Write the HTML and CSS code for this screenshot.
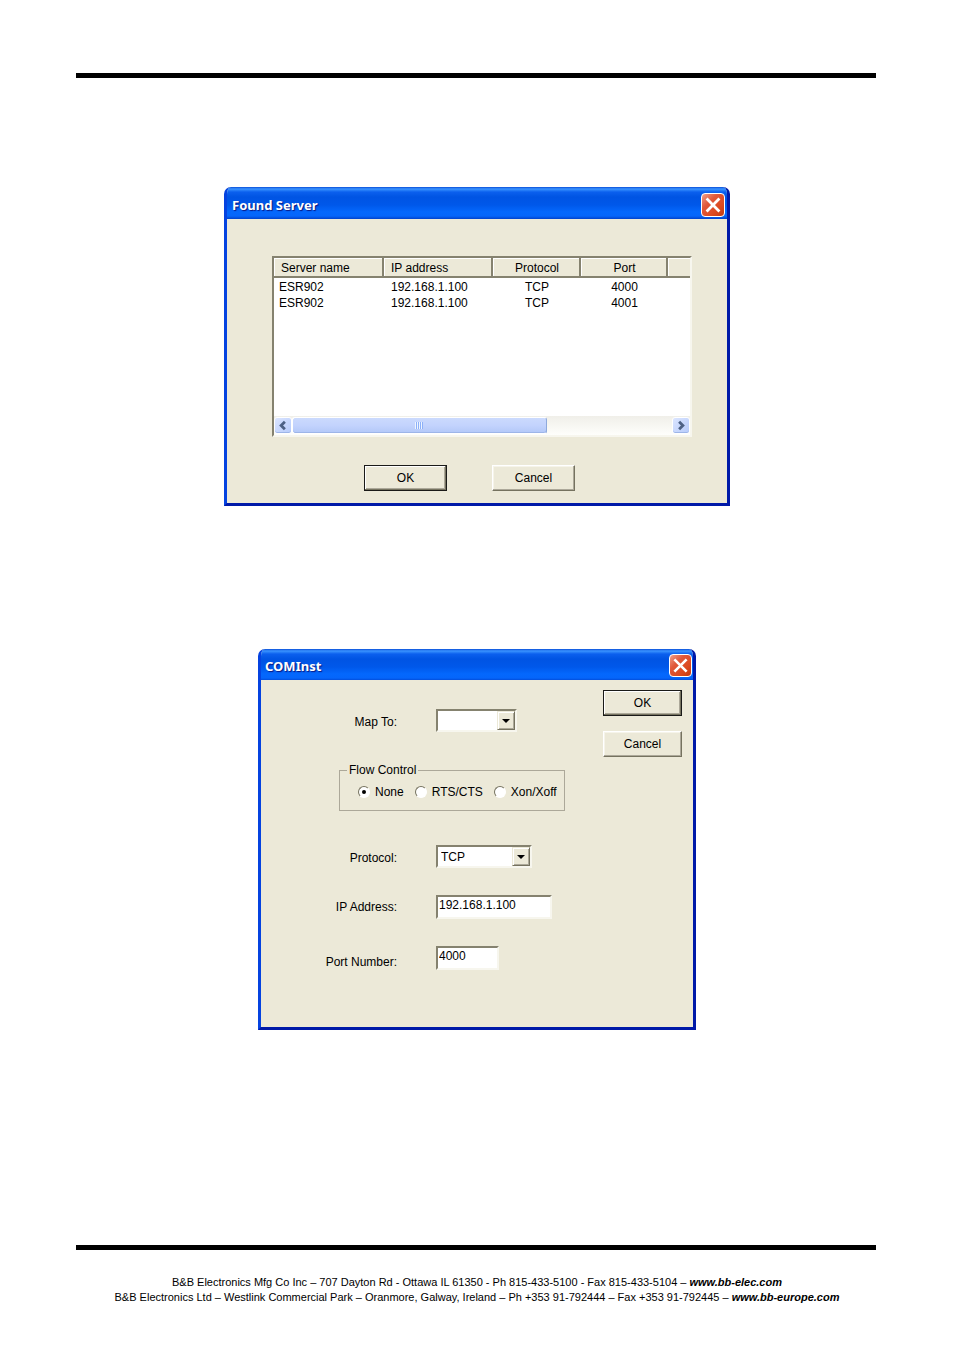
FILE: index.html
```html
<!DOCTYPE html>
<html lang="en">
<head>
<meta charset="utf-8">
<title>Found Server and COMInst dialogs</title>
<link rel="stylesheet" href="styles.css">
</head>
<body>
<div class="page">
  <hr class="rule">
  <main class="content">
    <section class="dialog dialog-found" aria-labelledby="found-title">
      <header class="titlebar">
        <h2 class="title" id="found-title">Found Server</h2>
        <button class="close" type="button" aria-label="Close"><svg viewBox="0 0 24 24"><path d="M5 5 L19 19 M19 5 L5 19"/></svg></button>
      </header>
      <div class="found-body">
        <div class="list">
          <table class="servers">
            <colgroup><col class="c-name"><col class="c-ip"><col class="c-proto"><col class="c-port"><col></colgroup>
            <thead>
              <tr><th>Server name</th><th>IP address</th><th class="mid">Protocol</th><th class="mid">Port</th><th></th></tr>
            </thead>
            <tbody>
              <tr><td>ESR902</td><td>192.168.1.100</td><td class="mid">TCP</td><td class="mid">4000</td><td></td></tr>
              <tr><td>ESR902</td><td>192.168.1.100</td><td class="mid">TCP</td><td class="mid">4001</td><td></td></tr>
            </tbody>
          </table>
          <div class="scrollbar">
            <button class="scroll-btn" type="button" aria-label="Scroll left"><svg viewBox="0 0 16 16"><path d="M10 4 L6 8 L10 12"/></svg></button>
            <div class="track"><div class="thumb"><span class="grip"></span></div></div>
            <button class="scroll-btn" type="button" aria-label="Scroll right"><svg viewBox="0 0 16 16"><path d="M6 4 L10 8 L6 12"/></svg></button>
          </div>
        </div>
        <div class="found-actions">
          <button class="btn btn-default" type="button">OK</button>
          <button class="btn" type="button">Cancel</button>
        </div>
      </div>
    </section>

    <section class="dialog dialog-com" aria-labelledby="com-title">
      <header class="titlebar">
        <h2 class="title" id="com-title">COMInst</h2>
        <button class="close" type="button" aria-label="Close"><svg viewBox="0 0 24 24"><path d="M5 5 L19 19 M19 5 L5 19"/></svg></button>
      </header>
      <form class="com-body">
        <div class="fields">
          <div class="field">
            <label for="map">Map To:</label>
            <span class="combo combo-map"><select id="map"><option></option></select><span class="drop"></span></span>
          </div>
          <fieldset class="flow">
            <legend>Flow Control</legend>
            <div class="radios">
              <label class="radio"><input type="radio" name="flow" checked>None</label>
              <label class="radio"><input type="radio" name="flow">RTS/CTS</label>
              <label class="radio"><input type="radio" name="flow">Xon/Xoff</label>
            </div>
          </fieldset>
          <div class="field">
            <label for="protocol">Protocol:</label>
            <span class="combo combo-protocol"><select id="protocol"><option>TCP</option></select><span class="drop"></span></span>
          </div>
          <div class="field field-ip">
            <label for="ip">IP Address:</label>
            <input class="text text-ip" id="ip" type="text" value="192.168.1.100">
          </div>
          <div class="field field-port">
            <label for="port">Port Number:</label>
            <input class="text text-port" id="port" type="text" value="4000">
          </div>
        </div>
        <div class="com-actions">
          <button class="btn btn-default" type="button">OK</button>
          <button class="btn" type="button">Cancel</button>
        </div>
      </form>
    </section>
  </main>
  <hr class="rule">
  <footer class="footer">
    <p>B&amp;B Electronics Mfg Co Inc – 707 Dayton Rd - Ottawa IL 61350 - Ph 815-433-5100 - Fax 815-433-5104 – <a href="#">www.bb-elec.com</a></p>
    <p>B&amp;B Electronics Ltd – Westlink Commercial Park – Oranmore, Galway, Ireland – Ph +353 91-792444 – Fax +353 91-792445 – <a href="#">www.bb-europe.com</a></p>
  </footer>
</div>
</body>
</html>
```

FILE: styles.css
```css
* { box-sizing: border-box; }

body {
  margin: 0;
  background: #fff;
  color: #000;
  font: 12px/16px "Liberation Sans", Arial, sans-serif;
}

button, input, select { font: inherit; color: inherit; margin: 0; }

.page {
  display: flex;
  flex-direction: column;
  min-height: 100vh;
  padding: 73px 76px 49px;
}

.rule {
  width: auto;
  height: 5px;
  margin: 0 2px 0 0;
  border: 0;
  background: #000;
}

.content {
  flex: 1;
  display: flex;
  flex-direction: column;
  align-items: center;
  gap: 143px;
  padding: 109px 0 40px;
}

.dialog {
  max-width: 100%;
  border: 3px solid;
  border-color: #0a52e6 #0019a8 #0019a8 #0543e0;
  border-top: 0;
  border-radius: 7px 7px 0 0;
  background: #ece9d8;
  overflow: hidden;
}
.dialog-found { width: 506px; }
.dialog-com { width: 438px; }

.titlebar {
  display: flex;
  align-items: center;
  justify-content: space-between;
  height: 32px;
  margin: 0 -3px;
  padding: 3px 5px 0 8px;
  background: linear-gradient(#0a4fd8 0, #3a94ff 2px, #0b60ee 5px, #0054e3 10px, #0058ea 18px, #0468fd 25px, #0566fb 29px, #0142cc 32px);
}
.title {
  margin: 0;
  color: #fff;
  font: bold 13px/20px "Trebuchet MS", "Noto Sans", sans-serif;
  text-shadow: 1px 1px 1px #0a1883;
}
.close {
  display: flex;
  width: 24px;
  height: 24px;
  padding: 0;
  border: 1px solid #fff;
  border-radius: 4px;
  background: linear-gradient(135deg, #f0a08a, #e0583a 35%, #dc4a20 70%, #c03a10);
}
.dialog-com .titlebar { height: 31px; padding: 2px 4px 0 7px; }
.dialog-com .close { width: 23px; height: 23px; }
.close svg { width: 100%; height: 100%; }
.close path { fill: none; stroke: #fff; stroke-width: 3; }

.found-body { padding: 37px 35px 12px 45px; }

.list {
  display: flex;
  flex-direction: column;
  justify-content: space-between;
  height: 181px;
  border: 2px solid;
  border-color: #85826f #f7f6ee #f7f6ee #85826f;
  background: #fff;
}
.servers {
  width: 100%;
  table-layout: fixed;
  border-collapse: separate;
  border-spacing: 0;
}
.c-name { width: 110px; }
.c-ip { width: 109px; }
.c-proto { width: 88px; }
.c-port { width: 87px; }
.servers th {
  height: 20px;
  padding: 1px 5px 0 7px;
  border-right: 2px solid #85826f;
  border-bottom: 2px solid #85826f;
  background: #ece9d8;
  box-shadow: inset 1px 1px #fff;
  font-weight: normal;
  line-height: 16px;
  text-align: left;
}
.servers th:last-child { border-right: 0; }
.servers td { height: 16px; padding: 0 5px; line-height: 16px; }
.servers td:nth-child(2) { padding-left: 7px; }
.servers tbody tr:first-child td { padding-top: 1px; }
.servers .mid { text-align: center; }

.scrollbar {
  display: flex;
  height: 19px;
  padding: 1px 0;
  background: linear-gradient(#f0efe9, #fefefb);
}
.scroll-btn {
  flex: none;
  display: flex;
  width: 18px;
  height: 17px;
  padding: 0;
  border: 1px solid #fff;
  border-radius: 3px;
  background: linear-gradient(135deg, #dbe5ff, #b6cbfb);
  box-shadow: inset 0 -1px #9db5e8;
}
.scroll-btn svg { width: 16px; height: 15px; }
.scroll-btn path { fill: none; stroke: #4d6185; stroke-width: 3; }
.track { flex: 1; display: flex; }
.thumb {
  display: flex;
  align-items: center;
  justify-content: center;
  width: 67%;
  border: 1px solid #fff;
  border-right-color: #8ea9dc;
  border-radius: 3px;
  background: linear-gradient(#cbdafd, #c3d3fd 50%, #b2c8f8);
  box-shadow: inset 0 -1px #9db5e8;
}
.grip {
  width: 8px;
  height: 7px;
  background: repeating-linear-gradient(90deg, #eef4fe 0 1px, #8cb0f8 1px 2px);
}

.found-actions {
  display: flex;
  gap: 45px;
  padding: 28px 0 0 92px;
}

.btn {
  width: 83px;
  height: 26px;
  padding: 0 0 1px;
  border: 1px solid;
  border-color: #fff #75725f #75725f #fff;
  background: #ece9d8;
  box-shadow: inset -1px -1px #aca899, inset 1px 1px #f6f4ea;
}
.btn-default {
  border-color: #1a1a18;
  box-shadow: inset -1px -1px #75725f, inset 1px 1px #fff, inset -2px -2px #aca899;
}

.com-body {
  display: flex;
  justify-content: space-between;
  padding: 0 11px 57px 0;
}
.com-actions {
  display: flex;
  flex-direction: column;
  gap: 15px;
  padding-top: 10px;
}
.com-actions .btn { width: 79px; }

.fields { padding-top: 29px; }
.field {
  display: grid;
  grid-template-columns: 136px auto;
  column-gap: 39px;
  align-items: center;
  justify-content: start;
}
.field > label { text-align: right; padding-top: 3px; }
.field + .field { margin-top: 27px; }
.field-ip > label { padding-top: 0; }
.field-port { align-items: end; }

.combo {
  position: relative;
  display: block;
  height: 23px;
  border: 2px solid;
  border-color: #85826f #f7f6ee #f7f6ee #85826f;
  background: #fff;
}
.combo-map { width: 81px; }
.combo-protocol { width: 96px; }
.combo select {
  display: block;
  width: 100%;
  height: 100%;
  padding: 0 20px 0 3px;
  border: 0;
  background: transparent;
  appearance: none;
}
.drop {
  position: absolute;
  top: 0;
  right: 0;
  display: grid;
  place-items: center;
  width: 18px;
  height: 19px;
  border: 1px solid;
  border-color: #ece9d8 #75725f #75725f #ece9d8;
  background: #ece9d8;
  box-shadow: inset 1px 1px #fff, inset -1px -1px #aca899;
  pointer-events: none;
}
.drop::after {
  content: "";
  border: 4px solid transparent;
  border-top-color: #000;
  border-bottom: 0;
}

.text {
  height: 24px;
  padding: 0 2px 4px 1px;
  border: 2px solid;
  border-color: #85826f #f7f6ee #f7f6ee #85826f;
  background: #fff;
}
.text-ip { width: 116px; }
.text-port { width: 63px; }

.flow {
  width: 226px;
  margin: 30px 0 34px 78px;
  padding: 0 0 10px 18px;
  border: 1px solid #aca899;
}
.flow legend { margin-left: -11px; padding: 0 2px; }
.radios { display: flex; gap: 11px; padding-top: 6px; }
.radio { display: flex; align-items: center; gap: 5px; white-space: nowrap; }
.radio input {
  display: grid;
  place-items: center;
  width: 12px;
  height: 12px;
  border: 1px solid;
  border-color: #75725f #fff #fff #75725f;
  border-radius: 50%;
  background: #fff;
  appearance: none;
}
.radio input:checked::before {
  content: "";
  width: 4px;
  height: 4px;
  border-radius: 50%;
  background: #000;
}

.footer {
  padding-top: 25px;
  font: 11px/15px "Liberation Sans", Arial, sans-serif;
  text-align: center;
}
.footer p { margin: 0; }
.footer a { color: inherit; font-weight: bold; font-style: italic; text-decoration: none; }
```
